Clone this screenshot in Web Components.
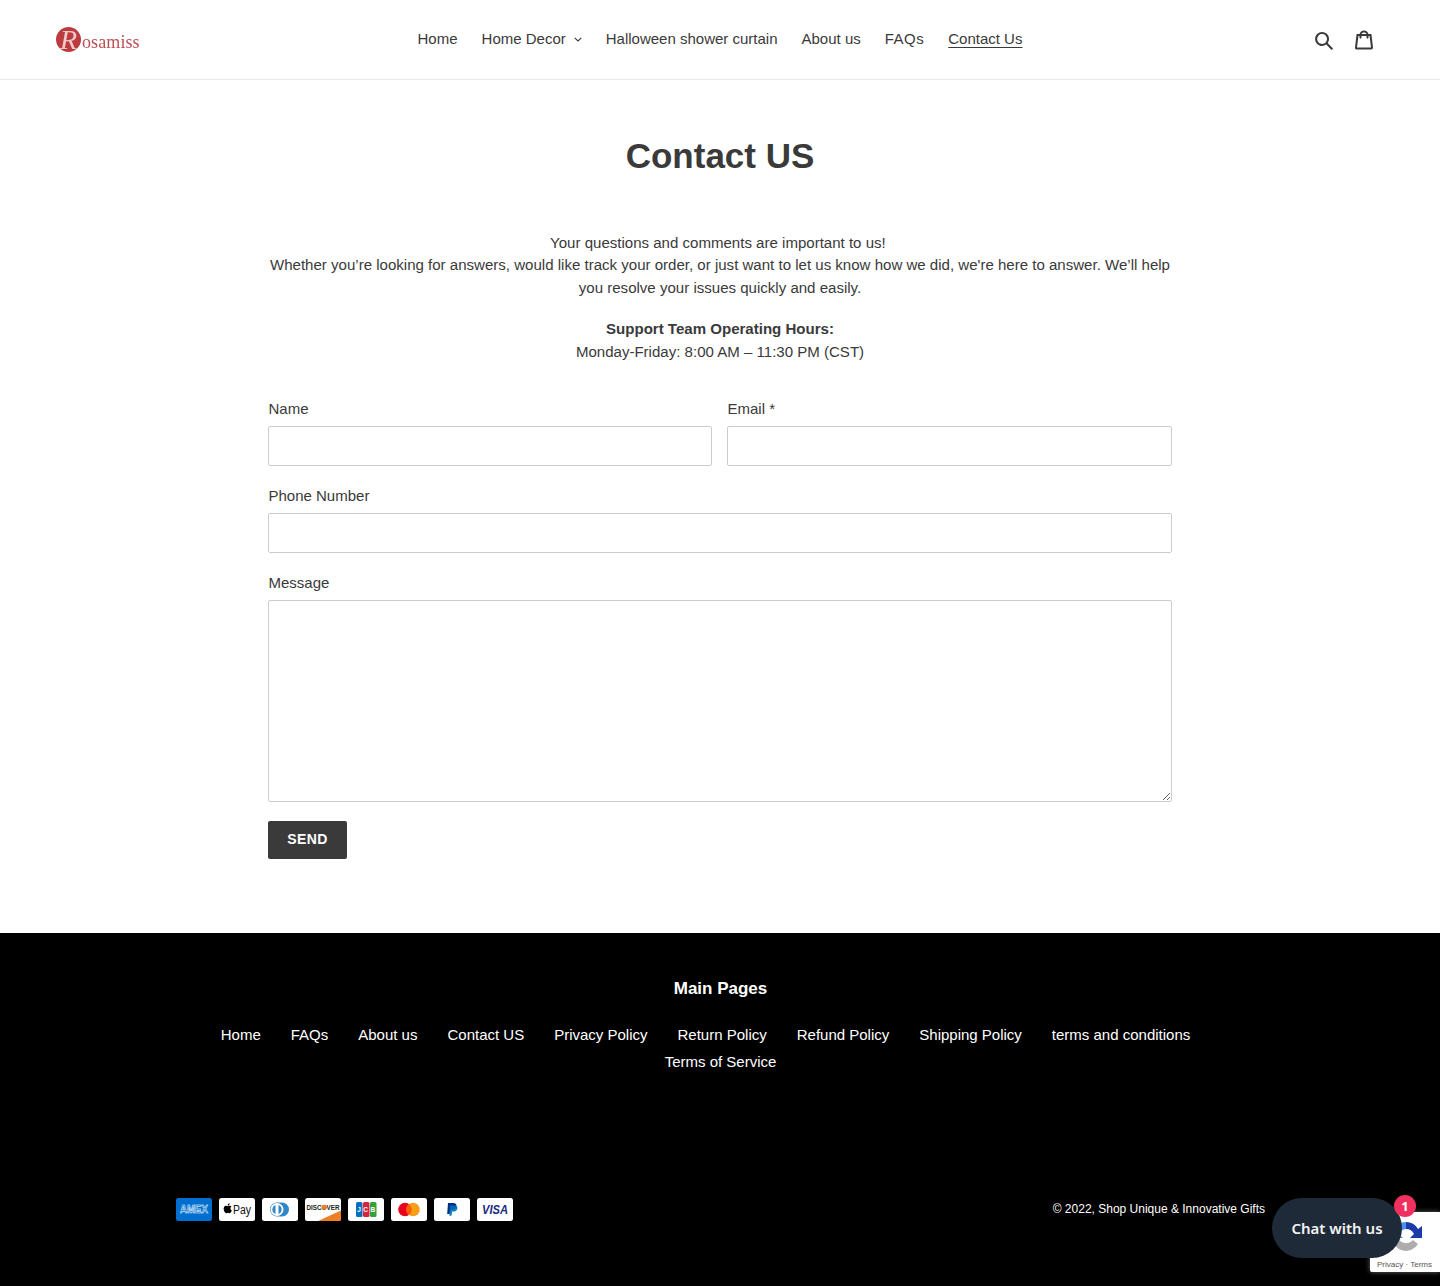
<!DOCTYPE html>
<html lang="en"><head><meta charset="utf-8"><title>Contact US</title>
<style>
html,body{margin:0;padding:0;background:#fff}
body{font-family:"Liberation Sans",Arial,sans-serif;color:#3a3a3a;position:relative;min-height:1286px}
</style></head><body>
<site-header></site-header>
<contact-page></contact-page>
<site-footer></site-footer>
<recaptcha-badge></recaptcha-badge>
<chat-widget></chat-widget>
<script>
function def(name,html){
  customElements.define(name,class extends HTMLElement{
    connectedCallback(){
      if(this.shadowRoot)return;
      const r=this.attachShadow({mode:'open'});
      r.innerHTML=typeof html==='function'?html(this):html;
    }
  });
}
def('nav-link',h=>`<style>
:host{display:block}
a{display:flex;align-items:center;color:#3a3a3a;text-decoration:none;font-size:15px;line-height:22px;white-space:nowrap}
span{display:block;${h.hasAttribute('active')?'text-decoration:underline;text-underline-offset:3px;':''}${h.hasAttribute('wide')?'letter-spacing:.5px;':''}}
svg{margin-left:8px;margin-top:2px}
</style><a href="#"><span><slot></slot></span>${h.hasAttribute('caret')?'<svg width="8" height="5" viewBox="0 0 8 5"><path d="M.7.8 4 4l3.3-3.2" fill="none" stroke="#3a3a3a" stroke-width="1.1"/></svg>':''}</a>`);
def('site-header',`<style>
:host{display:grid;grid-template-columns:1fr auto 1fr;align-items:center;height:79px;border-bottom:1px solid #e8e9eb;padding:0 66px 0 56px}
.logo{display:flex;align-items:center;color:#bd4f54;font:18px/20px "Liberation Serif",serif;letter-spacing:.1px;filter:blur(.35px)}
.badge{position:relative;width:25px;height:25px;border-radius:50%;background:#bc3b3f;color:#efc9c9;font:italic 28px/25px "Liberation Serif",serif;text-align:center;margin-right:1px;flex:none;overflow:visible}
.txt{padding-top:5px}
nav{display:flex;gap:24px;margin:0 -5px 2px 5px}
.icons{display:flex;justify-content:flex-end;gap:20px;align-items:center;color:#3a3a3a}
svg{display:block;width:20px;height:20px;fill:currentColor}
</style>
<div class="logo"><span class="badge">R</span><span class="txt">osamiss</span></div>
<nav><nav-link>Home</nav-link><nav-link caret>Home Decor</nav-link><nav-link>Halloween shower curtain</nav-link><nav-link>About us</nav-link><nav-link wide>FAQs</nav-link><nav-link active>Contact Us</nav-link></nav>
<div class="icons">
<svg viewBox="0 0 37 40"><path d="M35.6 36l-9.8-9.8c4.1-5.4 3.6-13.2-1.3-18.1-5.4-5.4-14.2-5.4-19.7 0-5.4 5.4-5.4 14.2 0 19.7 2.6 2.6 6.1 4.1 9.8 4.1 3 0 5.9-1 8.3-2.8l9.8 9.8c.4.4.9.6 1.4.6s1-.2 1.4-.6c.9-.9.9-2.1.1-2.9zm-20.9-8.2c-2.6 0-5.1-1-7-2.9-3.9-3.9-3.9-10.1 0-14C9.6 9 12.2 8 14.7 8s5.1 1 7 2.9c3.9 3.9 3.9 10.1 0 14-1.9 1.9-4.4 2.9-7 2.9z"/></svg>
<svg viewBox="0 0 37 40"><path d="M36.5 34.8L33.3 8h-5.9C26.7 3.9 23 .8 18.5.8S10.3 3.9 9.6 8H3.7L.5 34.8c-.2 1.5.4 2.4.9 3 .5.5 1.4 1.2 3.1 1.2h28c1.3 0 2.4-.4 3.1-1.3.7-.7 1-1.8.9-2.9zM18.5 4.8c2.5 0 4.5 1.4 5.1 3.2H13.4c.6-1.8 2.6-3.2 5.1-3.2zM4.5 35l2.8-23h2.2v3c0 1.1.9 2 2 2s2-.9 2-2v-3h10v3c0 1.1.9 2 2 2s2-.9 2-2v-3h2.2l2.8 23h-28z"/></svg>
</div>`);
def('form-field',h=>`<style>
:host{display:block}
label{display:block;font-size:15px;line-height:22px;margin-bottom:6px;padding-left:.5px;color:#3a3a3a}
input,textarea{display:block;width:100%;box-sizing:border-box;border:1px solid #cccccc;border-radius:2px;background:#fff;margin:0;padding:0 14px;font:15px "Liberation Sans",sans-serif;outline:none}
input{height:40px}
textarea{height:202px;padding-top:10px;resize:vertical}
</style><label>${h.getAttribute('label')}</label>${h.hasAttribute('multi')?'<textarea></textarea>':'<input type="text">'}`);
def('contact-page',`<style>
:host{display:block;width:904px;margin:0 auto;padding:55px 0 74px}
h1{margin:0 0 54.9px;font-size:35px;line-height:42px;font-weight:700;text-align:center;color:#3a3a3a}
.rte{font-size:15.05px;line-height:22.5px;text-align:center;padding:0 2px;margin-bottom:34.9px;color:#3a3a3a}
p{margin:0 0 18.7px}p:last-child{margin:0}
.form{display:grid;grid-template-columns:444px 445px;column-gap:15px;row-gap:19px}
.wide{grid-column:1/3}
.send{grid-column:1/3}
button{display:block;width:79px;height:38px;border:0;border-radius:2px;background:#3a3a3a;color:#fff;font:700 14px "Liberation Sans",sans-serif;letter-spacing:.03em;padding:0 0 2px}
</style>
<h1>Contact US</h1>
<div class="rte"><p>Your questions and comments are important to us!&nbsp;<br>Whether you’re looking for answers, would like track your order, or just want to let us know how we did, we're here to answer. We’ll help you resolve your issues quickly and easily.</p>
<p><b>Support Team Operating Hours:</b><br>Monday-Friday: 8:00 AM – 11:30 PM (CST)</p></div>
<div class="form">
<form-field label="Name"></form-field><form-field label="Email *"></form-field>
<form-field class="wide" label="Phone Number"></form-field>
<form-field class="wide" label="Message" multi></form-field>
<div class="send"><button>SEND</button></div>
</div>`);
const rect=(w)=>`<rect width="36" height="23" rx="2.5" fill="${w}"/>`;
def('pay-icon',h=>{
const t=h.getAttribute('type');
const icons={
amex:`${rect('#016fd0')}<text x="18" y="15" text-anchor="middle" font-family="Liberation Sans" font-weight="700" font-size="10" textLength="28" lengthAdjust="spacingAndGlyphs" fill="#016fd0" stroke="#fff" stroke-width=".5">AMEX</text>`,
apple:`${rect('#fff')}<path d="M8.7 7.2c.4-.5.7-1.1.6-1.8-.6 0-1.2.4-1.6.8-.3.4-.6 1.1-.5 1.7.6.1 1.2-.2 1.5-.7zm.6.9c-.9 0-1.6.5-2 .5s-1.1-.5-1.8-.5c-.9 0-1.8.5-2.3 1.4-1 1.7-.3 4.2.7 5.6.5.7 1 1.4 1.8 1.4.7 0 1-.5 1.8-.5s1.1.5 1.8.4c.8 0 1.2-.7 1.7-1.4.5-.8.7-1.5.8-1.6-.1 0-1.5-.6-1.5-2.2 0-1.4 1.1-2 1.2-2.1-.7-1-1.7-1-2.2-1z" transform="translate(2.2 .4) scale(.9)" fill="#000"/><text x="14" y="16" font-family="Liberation Sans" font-size="12" textLength="18" lengthAdjust="spacingAndGlyphs" fill="#111">Pay</text>`,
diners:`${rect('#fff')}<path d="M15 4.500h5a7 7 0 0 1 0 14h-5a7 7 0 0 1 0-14z" fill="#3086c8"/><circle cx="15" cy="11.500" r="6.500" fill="#fff"/><path d="M13.500 7a4.800 4.800 0 0 0 0 9zM16.500 7v9a4.800 4.800 0 0 0 0-9z" fill="#3086c8"/>`,
discover:`${rect('#fff')}<path d="M13 23 36 12.500V20.500a2.500 2.500 0 0 1-2.500 2.500z" fill="#ee7f22"/><text x="18" y="11.700" text-anchor="middle" font-family="Liberation Sans" font-weight="700" font-size="6.600" textLength="33" lengthAdjust="spacingAndGlyphs" fill="#222">DISCOVER</text><circle cx="19.300" cy="9.300" r="2.500" fill="#ee7f22"/>`,
jcb:`${rect('#fff')}<rect x="8" y="4" width="6.500" height="15" rx="1.500" fill="#0a6fc0"/><rect x="15" y="4" width="6.500" height="15" rx="1.500" fill="#d8233f"/><rect x="22" y="4" width="6.500" height="15" rx="1.500" fill="#33a13a"/><text x="18.200" y="14" text-anchor="middle" font-family="Liberation Sans" font-weight="700" font-size="6.500" textLength="18" fill="#fff">JCB</text>`,
master:`${rect('#fff')}<circle cx="14" cy="11.500" r="6.800" fill="#e8001c"/><circle cx="22" cy="11.500" r="6.800" fill="#f79e1b"/><path d="M18 6a6.800 6.800 0 0 1 0 11 6.800 6.800 0 0 1 0-11z" fill="#ff5f00"/>`,
paypal:`${rect('#fff')}<path d="M14 5h5.200c2.400 0 3.600 1.300 3.200 3.300-.5 2.400-2.200 3.500-4.400 3.500h-1.600l-.7 4.300h-2.500z" fill="#003087"/><path d="M16 7.500h4.800c2 0 3 1.100 2.600 3-.4 2.200-2 3.100-3.900 3.100h-1.300l-.7 4.200h-2.200z" fill="#0070ba" opacity=".9"/>`,
visa:`${rect('#fff')}<text x="18" y="16" text-anchor="middle" font-family="Liberation Sans" font-weight="700" font-style="italic" font-size="12" textLength="26" lengthAdjust="spacingAndGlyphs" fill="#1a2a7c">VISA</text>`
};
return `<style>:host{display:block;width:36px;height:23px}svg{display:block}</style><svg width="36" height="23" viewBox="0 0 36 23">${icons[t]}</svg>`;
});
def('site-footer',`<style>
:host{display:block;background:#000;color:#fff;height:353px;box-sizing:border-box;padding:44px 175px 0 176px;position:relative}
h4{margin:0 0 20px;font-size:17px;line-height:24px;font-weight:700;text-align:center}
ul{list-style:none;margin:0;padding:0;display:flex;flex-wrap:wrap;justify-content:center;font-size:15px;line-height:27px}
li:not(:last-child){margin-right:30px}
.bottom{display:flex;justify-content:space-between;align-items:center;margin-top:123px}
.pay{display:flex;gap:7px}
small{font-size:12px;line-height:23px}
</style>
<h4>Main Pages</h4>
<ul><li>Home</li><li>FAQs</li><li>About us</li><li>Contact US</li><li>Privacy Policy</li><li>Return Policy</li><li>Refund Policy</li><li>Shipping Policy</li><li>terms and conditions</li><li>Terms of Service</li></ul>
<div class="bottom"><div class="pay"><pay-icon type="amex"></pay-icon><pay-icon type="apple"></pay-icon><pay-icon type="diners"></pay-icon><pay-icon type="discover"></pay-icon><pay-icon type="jcb"></pay-icon><pay-icon type="master"></pay-icon><pay-icon type="paypal"></pay-icon><pay-icon type="visa"></pay-icon></div><small>© 2022, Shop Unique &amp; Innovative Gifts</small></div>`);
def('recaptcha-badge',`<style>
:host{position:absolute;left:1370px;top:1212px;width:70px;height:60px;background:#fff;border-radius:2px 0 0 2px;box-shadow:0 0 5px rgba(128,128,128,.8);font:8px/10px "Liberation Sans",sans-serif;color:#555;overflow:hidden}
svg{position:absolute;left:18px;top:6px}
span{position:absolute;left:7px;top:48px;white-space:nowrap}
</style>
<svg width="36" height="38" viewBox="0 0 36 38"><path d="M18 4a14 14 0 0 1 12 7l4-3v12H22l4-4a9 9 0 0 0-8-5z" fill="#1c3aa9"/><path d="M18 4A14 14 0 0 0 6 11l-3-3v12h12l-4-4a9 9 0 0 1 7-5z" fill="#4a90f5"/><path d="M4 20a14 14 0 0 0 26 6l-5-4a9 9 0 0 1-15-2z" fill="#adadad"/></svg>
<span>Privacy · Terms</span>`);
def('chat-widget',`<style>
:host{position:absolute;left:1272px;top:1198px;width:130px;height:60px;border-radius:30px;background:#1f2a38;color:#f2f3f4;font:600 15px/61px "Noto Sans","Open Sans",sans-serif;text-align:center;display:block;white-space:nowrap}
b{position:absolute;left:122px;top:-3px;width:22px;height:22px;border-radius:50%;background:#f0305f;color:#fff;font:700 13px/22px "Noto Sans",sans-serif}
</style>Chat with us<b>1</b>`);
</script>
</body></html>
